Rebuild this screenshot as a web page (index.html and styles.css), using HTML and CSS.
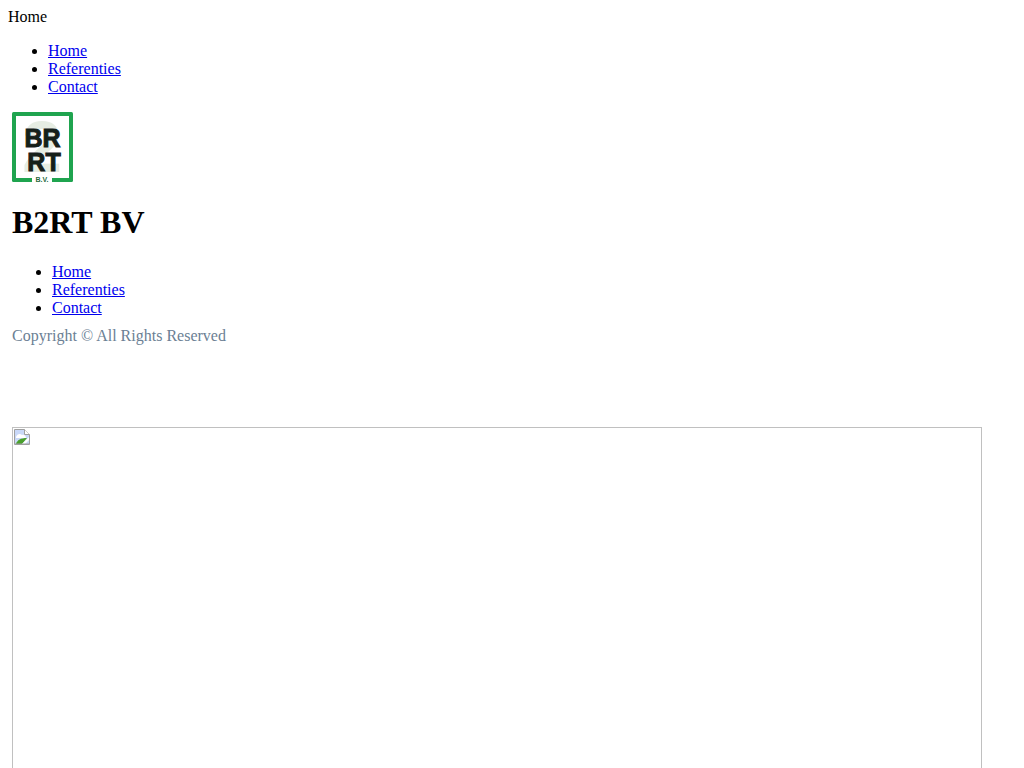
FILE: index.html
```html
<!DOCTYPE html>
<html lang="en">
<head>
  <meta charset="UTF-8" />
  <meta name="viewport" content="width=device-width, initial-scale=1.0"/>
  <title>B2RT BV</title>
  <link rel="stylesheet" href="styles.css">
</head>
<body>
  <div class="current-page">Home</div>
  <ul class="nav-list">
    <li><a href="#">Home</a></li>
    <li><a href="#">Referenties</a></li>
    <li><a href="#">Contact</a></li>
  </ul>

  <div class="site-panel">
    <!-- Logo -->
    <svg class="logo" width="61" height="70" viewBox="0 0 61 70">
      <rect x="0" y="0" width="61" height="70" rx="1.5" fill="#1fa44f"/>
      <rect x="4" y="4" width="53" height="62" fill="#fff"/>
      <text class="logo-back" x="30" y="60" text-anchor="middle">2</text>
      <text class="logo-text" x="30.5" y="34.5" text-anchor="middle">BR</text>
      <text class="logo-text" x="32" y="58.5" text-anchor="middle">RT</text>
      <rect x="20" y="63" width="20" height="7" fill="#fff"/>
      <text class="logo-small" x="30" y="69.5" text-anchor="middle">B.V.</text>
    </svg>

    <h1 class="site-title">B2RT BV</h1>

    <ul class="nav-list footer-nav">
      <li><a href="#">Home</a></li>
      <li><a href="#">Referenties</a></li>
      <li><a href="#">Contact</a></li>
    </ul>

    <p class="copyright">Copyright © All Rights Reserved</p>

    <!-- Image that did not load -->
    <div class="broken-image">
      <svg width="16" height="16" viewBox="0 0 16 16">
        <path d="M0.5 0.5H10.5L15.5 5.5V15.5H0.5Z" fill="#c9d8f8" stroke="#a0a0a0"/>
        <path d="M10.5 0.5V5.5H15.5" fill="#fff" stroke="#a0a0a0"/>
        <path d="M2 8C3 5 6 4 8 6C10 5 12 7 12 9H2Z" fill="#fff"/>
        <path d="M2 15C3 11 7 9 13 9L8 15Z" fill="#4aa02c"/>
        <path d="M8 15L15 8V11L11 15Z" fill="#fff"/>
        <path d="M1 15H15" stroke="#a0a0a0" fill="none"/>
      </svg>
    </div>
  </div>
</body>
</html>
```

FILE: styles.css
```css
body {
  font-family: "Liberation Serif", serif;
  font-size: 16px;
  background-color: #fff;
  color: #000;
  margin: 8px;
}
a {
  color: #0000ee;
}
.nav-list {
  margin: 16px 0;
  padding-left: 40px;
}
.site-panel {
  padding: 0 4px;
}
.logo {
  display: block;
  margin-bottom: 4px;
}
.logo-back {
  font-family: "Liberation Sans", sans-serif;
  font-size: 72px;
  font-weight: bold;
  fill: #e6ede3;
}
.logo-text {
  font-family: "Liberation Sans", sans-serif;
  font-size: 25px;
  font-weight: bold;
  fill: #16201a;
  stroke: #16201a;
  stroke-width: 1px;
}
.logo-small {
  font-family: "Liberation Sans", sans-serif;
  font-size: 7px;
  font-weight: bold;
  fill: #2a6a40;
}
.site-title {
  font-size: 32px;
  font-weight: bold;
  margin: 22px 0 22px;
}
.footer-nav {
  margin: 0 0 10px;
}
.copyright {
  color: #6b8094;
  margin: 0 0 82px;
}
.broken-image {
  box-sizing: border-box;
  width: 970px;
  height: 500px;
  padding: 1px;
  border: 1px solid #c0c0c0;
}
.broken-image svg {
  display: block;
}
```
